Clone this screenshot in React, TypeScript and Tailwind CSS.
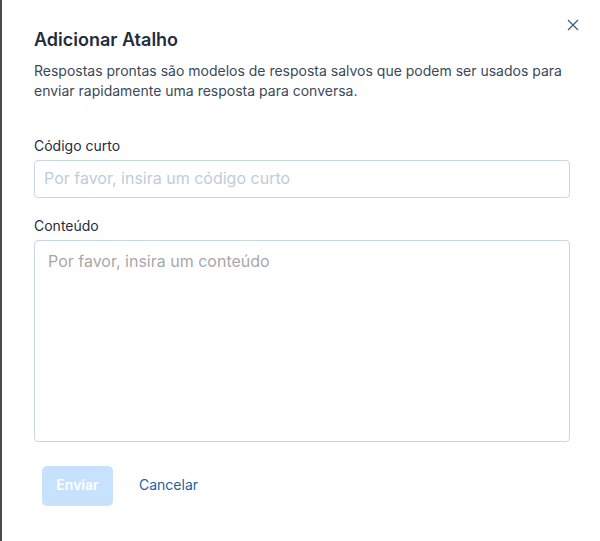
import React from "react";

export default function App() {
  return (
    <div className="h-[541px] w-[600px] bg-[#4b4b4b] flex" style={{ fontFamily: "Inter, 'Noto Sans', sans-serif" }}>
      <div className="ml-[2px] flex-1 bg-white relative pl-[32px] pr-[30px] pt-[28px]">
        <button className="absolute right-[20px] top-[18px] w-[14px] h-[14px] flex items-center justify-center text-[#3a5a86]">
          <svg width="12" height="12" viewBox="0 0 12 12" fill="none" stroke="currentColor" strokeWidth="1.2">
            <path d="M1 1 L11 11 M11 1 L1 11" />
          </svg>
        </button>
        <h2 className="text-[18px] leading-[24px] font-semibold text-[#1f2d3d]">Adicionar Atalho</h2>
        <p className="mt-[9px] text-[14px] leading-[20px] text-[#3c4858]">
          Respostas prontas são modelos de resposta salvos que podem ser usados para enviar rapidamente uma resposta para conversa.
        </p>
        <div className="mt-[35px]">
          <label className="block text-[14px] leading-[20px] text-[#1f2d3d]">Código curto</label>
          <input
            className="mt-[4px] block w-full h-[38px] rounded-[4px] border border-[#c9d6e3] px-[9px] pb-[2px] text-[16px] outline-none placeholder:text-[#c0ccda]"
            placeholder="Por favor, insira um código curto"
          />
        </div>
        <div className="mt-[18px]">
          <label className="block text-[14px] leading-[20px] text-[#1f2d3d]">Conteúdo</label>
          <textarea
            className="mt-[4px] block w-full h-[202px] rounded-[4px] border border-[#c9d6e3] px-[13px] py-[9px] text-[16px] leading-[22px] outline-none resize-none placeholder:text-[#a8a8a8]"
            placeholder="Por favor, insira um conteúdo"
          />
        </div>
        <div className="mt-[24px] flex items-center ml-[8px]">
          <button className="h-[40px] w-[71px] rounded-[5px] bg-[#c6e2ff] pb-[3px] text-white text-[14px] font-semibold">Enviar</button>
          <button className="ml-[26px] pb-[4px] text-[14px] text-[#1f5f9e]">Cancelar</button>
        </div>
      </div>
    </div>
  );
}
